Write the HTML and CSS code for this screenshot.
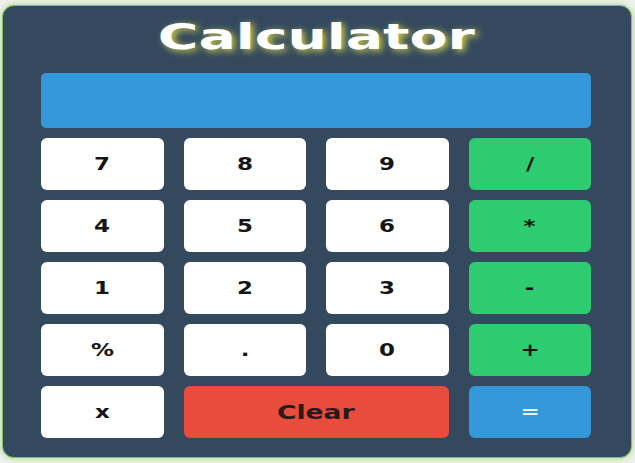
FILE: index.html
```html
<!DOCTYPE html>
<html lang="en">
<head>
<meta charset="utf-8">
<title>Calculator</title>
<link rel="stylesheet" href="styles.css">
</head>
<body>
<div class="calculator">
  <h1 class="title"><span class="wide">Calculator</span></h1>
  <div class="display"></div>
  <div class="keys">
    <button class="key"><span class="wide">7</span></button>
    <button class="key"><span class="wide">8</span></button>
    <button class="key"><span class="wide">9</span></button>
    <button class="key op"><span class="wide">/</span></button>
    <button class="key"><span class="wide">4</span></button>
    <button class="key"><span class="wide">5</span></button>
    <button class="key"><span class="wide">6</span></button>
    <button class="key op"><span class="wide">*</span></button>
    <button class="key"><span class="wide">1</span></button>
    <button class="key"><span class="wide">2</span></button>
    <button class="key"><span class="wide">3</span></button>
    <button class="key op"><span class="wide">-</span></button>
    <button class="key"><span class="wide">%</span></button>
    <button class="key"><span class="wide">.</span></button>
    <button class="key"><span class="wide">0</span></button>
    <button class="key op"><span class="wide">+</span></button>
    <button class="key"><span class="wide">x</span></button>
    <button class="key clear"><span class="wide">Clear</span></button>
    <button class="key equals"><span class="wide">=</span></button>
  </div>
</div>
</body>
</html>
```
FILE: styles.css
```css
* { box-sizing: border-box; }
html, body { margin: 0; padding: 0; }
body {
  background: #eef1ec;
  width: 635px;
  height: 463px;
  overflow: hidden;
  padding: 5px 0 0 2px;
  font-family: "DejaVu Sans", Verdana, sans-serif;
}
.calculator {
  width: 630px;
  height: 453px;
  background: #34495e;
  border: 1px solid #86c35a;
  border-radius: 12px;
  box-shadow: 0 0 6px rgba(120, 190, 80, 0.6);
  padding: 0 40px 0 38px;
  display: flex;
  flex-direction: column;
}
.title {
  margin: 0;
  height: 67px;
  padding-bottom: 6px;
  display: flex;
  align-items: center;
  justify-content: center;
  color: #ffffff;
  font-size: 35px;
  font-weight: bold;
  text-shadow: 2px 2px 6px rgba(215, 215, 80, 0.9);
}
.title .wide { transform: scaleX(1.58); }
.wide { display: inline-block; }
.display {
  height: 55px;
  background: #3498db;
  border-radius: 5px;
  margin-bottom: 10px;
}
.keys {
  display: grid;
  grid-template-columns: repeat(4, 1fr);
  grid-auto-rows: 52px;
  column-gap: 20px;
  row-gap: 10px;
}
.key {
  border: none;
  border-radius: 6px;
  background: #ffffff;
  color: #151515;
  font-family: "DejaVu Sans", Verdana, sans-serif;
  font-size: 17px;
  font-weight: bold;
  padding: 0;
  display: flex;
  align-items: center;
  justify-content: center;
}
.key .wide { transform: scaleX(1.35); }
.op { background: #2ecc71; }
.clear { background: #e74c3c; grid-column: span 2; font-size: 19px; color: #2a1a1a; }
.clear .wide { transform: scaleX(1.4); }
.equals { background: #3498db; color: #e8f4fb; }
```
